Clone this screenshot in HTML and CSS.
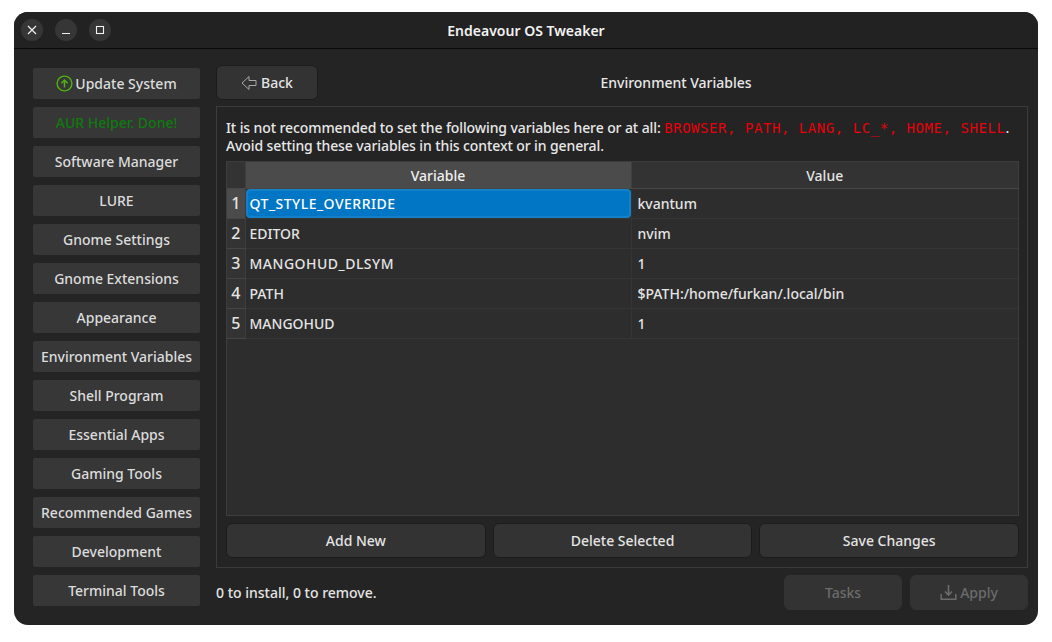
FILE: index.html
```html
<!DOCTYPE html>
<html lang="en">

    <head>
        <meta charset="UTF-8">
        <title>Endeavour OS Tweaker</title>
        <link rel="stylesheet" href="styles.css">
    </head>

    <body>
        <div class="window">
            <header class="titlebar">
                <div class="window-controls">
                    <span class="control">
                        <svg width="10" height="10" viewBox="0 0 10 10"><path d="M1 1l8 8M9 1l-8 8" stroke="#f0f0f0" stroke-width="1.2" fill="none"/></svg>
                    </span>
                    <span class="control">
                        <svg width="10" height="10" viewBox="0 0 10 10"><path d="M1 8.5h8" stroke="#f0f0f0" stroke-width="1.2" fill="none"/></svg>
                    </span>
                    <span class="control">
                        <svg width="10" height="10" viewBox="0 0 10 10"><rect x="1.5" y="1.5" width="7" height="7" stroke="#f0f0f0" stroke-width="1.1" fill="none"/></svg>
                    </span>
                </div>
                <div class="title">Endeavour OS Tweaker</div>
            </header>

            <div class="content">
                <nav class="sidebar">
                    <div class="side-btn">
                        <svg class="update-icon" width="17" height="17" viewBox="0 0 17 17"><circle cx="8.5" cy="8.5" r="7.4" stroke="#4eb30e" stroke-width="1.4" fill="none"/><path d="M8.5 12.5V5.2M5.4 8.2l3.1-3.1 3.1 3.1" stroke="#4eb30e" stroke-width="1.5" fill="none"/></svg>
                        Update System
                    </div>
                    <div class="side-btn done">AUR Helper. Done!</div>
                    <div class="side-btn">Software Manager</div>
                    <div class="side-btn">LURE</div>
                    <div class="side-btn">Gnome Settings</div>
                    <div class="side-btn">Gnome Extensions</div>
                    <div class="side-btn">Appearance</div>
                    <div class="side-btn">Environment Variables</div>
                    <div class="side-btn">Shell Program</div>
                    <div class="side-btn">Essential Apps</div>
                    <div class="side-btn">Gaming Tools</div>
                    <div class="side-btn">Recommended Games</div>
                    <div class="side-btn">Development</div>
                    <div class="side-btn">Terminal Tools</div>
                </nav>

                <main class="main">
                    <div class="page-head">
                        <button class="btn back-btn">
                            <svg width="16" height="16" viewBox="0 0 16 16"><path d="M8 1.5L1 8l7 6.5v-4h7v-5H8z" stroke="#a8a8a8" stroke-width="1" fill="none"/></svg>
                            Back
                        </button>
                        <div class="page-title">Environment Variables</div>
                    </div>

                    <section class="panel">
                        <p class="warning">It is not recommended to set the following variables here or at all: <code>BROWSER, PATH, LANG, LC_*, HOME, SHELL</code>.<br>Avoid setting these variables in this context or in general.</p>

                        <div class="table-box">
                            <table class="env-table">
                                <thead>
                                    <tr>
                                        <th class="num"></th>
                                        <th class="sorted">Variable</th>
                                        <th>Value</th>
                                    </tr>
                                </thead>
                                <tbody>
                                    <tr>
                                        <td class="num current">1</td>
                                        <td class="selected"><span class="wide">QT_STYLE_OVERRIDE</span></td>
                                        <td>kvantum</td>
                                    </tr>
                                    <tr>
                                        <td class="num">2</td>
                                        <td>EDITOR</td>
                                        <td>nvim</td>
                                    </tr>
                                    <tr>
                                        <td class="num">3</td>
                                        <td class="wide">MANGOHUD_DLSYM</td>
                                        <td>1</td>
                                    </tr>
                                    <tr>
                                        <td class="num">4</td>
                                        <td>PATH</td>
                                        <td>$PATH:/home/furkan/.local/bin</td>
                                    </tr>
                                    <tr>
                                        <td class="num">5</td>
                                        <td>MANGOHUD</td>
                                        <td>1</td>
                                    </tr>
                                </tbody>
                            </table>
                        </div>

                        <div class="panel-actions">
                            <button class="btn">Add New</button>
                            <button class="btn">Delete Selected</button>
                            <button class="btn">Save Changes</button>
                        </div>
                    </section>

                    <footer class="status">
                        <span class="status-text">0 to install, 0 to remove.</span>
                        <button class="btn disabled">Tasks</button>
                        <button class="btn disabled">
                            <svg width="17" height="17" viewBox="0 0 17 17"><path d="M8.5 1v9.5M5 7.5l3.5 3.5L12 7.5" stroke="#6c6c6c" stroke-width="1.6" fill="none"/><path d="M1.2 10v5.2h14.6V10" stroke="#6c6c6c" stroke-width="1.5" fill="none"/></svg>
                            Apply
                        </button>
                    </footer>
                </main>
            </div>
        </div>
    </body>

</html>
```

FILE: styles.css
```css
* {
    box-sizing: border-box;
}

body {
    margin: 0;
    padding: 12px 14px;
    background-color: #ffffff;
    font-family: "Noto Sans", sans-serif;
    font-size: 14px;
    color: #e4e4e4;
}

.window {
    width: 1024px;
    height: 613px;
    background-color: #242424;
    border-radius: 14px;
    overflow: hidden;
}

.titlebar {
    position: relative;
    height: 37px;
    background-color: #222222;
    border-bottom: 1px solid #0b0b0b;
    display: flex;
    align-items: center;
    justify-content: center;
}

.window-controls {
    position: absolute;
    left: 7px;
    top: 7px;
    display: flex;
    gap: 12px;
}

.control {
    width: 22px;
    height: 22px;
    border-radius: 50%;
    background-color: #363636;
    display: flex;
    align-items: center;
    justify-content: center;
}

.title {
    font-weight: 600;
    font-size: 14px;
    color: #f2f2f2;
}

.content {
    display: flex;
    padding: 16px 10px 0 19px;
}

.sidebar {
    width: 167px;
    padding-top: 3px;
    display: flex;
    flex-direction: column;
    gap: 8px;
    flex-shrink: 0;
}

.side-btn {
    height: 31px;
    background-color: #373737;
    border-radius: 2px;
    display: flex;
    align-items: center;
    justify-content: center;
    gap: 2px;
    font-weight: 500;
    color: #dcdcdc;
}

.side-btn.done {
    color: #0f7a0f;
}

.main {
    width: 812px;
    margin-left: 16px;
}

.page-head {
    display: flex;
    align-items: center;
    height: 35px;
}

.btn {
    font-family: inherit;
    font-size: 14px;
    font-weight: 500;
    color: #e4e4e4;
    background-color: #333333;
    border: 1px solid #1c1c1c;
    border-radius: 6px;
    height: 35px;
    display: flex;
    align-items: center;
    justify-content: center;
    gap: 3px;
}

.back-btn {
    width: 102px;
    flex-shrink: 0;
    gap: 4px;
    padding-left: 6px;
}

.page-title {
    flex: 1;
    text-align: center;
    font-weight: 500;
    padding-left: 6px;
    color: #e8e8e8;
}

.panel {
    margin-top: 6px;
    height: 462px;
    border: 1px solid #3b3b3b;
    padding: 12px 8px 0 9px;
}

.warning {
    margin: 0;
    line-height: 18px;
    font-weight: 500;
    letter-spacing: -0.1px;
    color: #e8e8e8;
}

.warning code {
    font-family: "DejaVu Sans Mono", monospace;
    font-size: 14px;
    line-height: 1;
    letter-spacing: 0.55px;
    color: #e8000a;
}

.table-box {
    margin-top: 6px;
    height: 355px;
    background-color: #2d2d2d;
    border: 1px solid #3d3d3d;
}

.env-table {
    width: 100%;
    border-collapse: collapse;
    table-layout: fixed;
}

.env-table th {
    height: 26px;
    padding: 1px 0 0;
    background-color: #333333;
    border-right: 1px solid #3f3f3f;
    border-bottom: 1px solid #474747;
    font-weight: 500;
    font-size: 14px;
    color: #e4e4e4;
}

.env-table th:last-child {
    border-right: none;
}

.env-table th.num {
    width: 18px;
}

.env-table th.sorted {
    width: 386px;
    background-color: #4b4b4b;
    color: #f0f0f0;
}

.env-table td {
    height: 30px;
    padding: 0 5px 0 4px;
    border-bottom: 1px solid #353535;
    border-right: 1px solid #353535;
    font-weight: 500;
    color: #e4e4e4;
    white-space: nowrap;
}

.env-table td:last-child {
    border-right: none;
    padding-left: 6px;
}

.env-table td.wide,
.env-table span.wide {
    letter-spacing: 0.5px;
}

.env-table td.num {
    padding: 0;
    text-align: center;
    font-size: 16px;
    background-color: #333333;
    border-bottom-color: #454545;
    border-right: 1px solid #3d3d3d;
}

.env-table td.num.current {
    background-color: #4b4b4b;
}

.env-table td.selected {
    padding: 0;
}

.env-table td.selected span {
    display: flex;
    align-items: center;
    height: 29px;
    padding-left: 2px;
    background-color: #0076c4;
    border: 2px solid #1480c8;
    border-radius: 4px;
    color: #ffffff;
}

.panel-actions {
    margin-top: 7px;
    display: flex;
    gap: 7px;
}

.panel-actions .btn {
    flex: 1;
}

.status {
    margin-top: 7px;
    display: flex;
    align-items: center;
    gap: 8px;
}

.status-text {
    flex: 1;
    font-weight: 500;
    color: #e4e4e4;
}

.btn.disabled {
    width: 118px;
    background-color: #333333;
    border-color: #333333;
    color: #6c6c6c;
}
```
